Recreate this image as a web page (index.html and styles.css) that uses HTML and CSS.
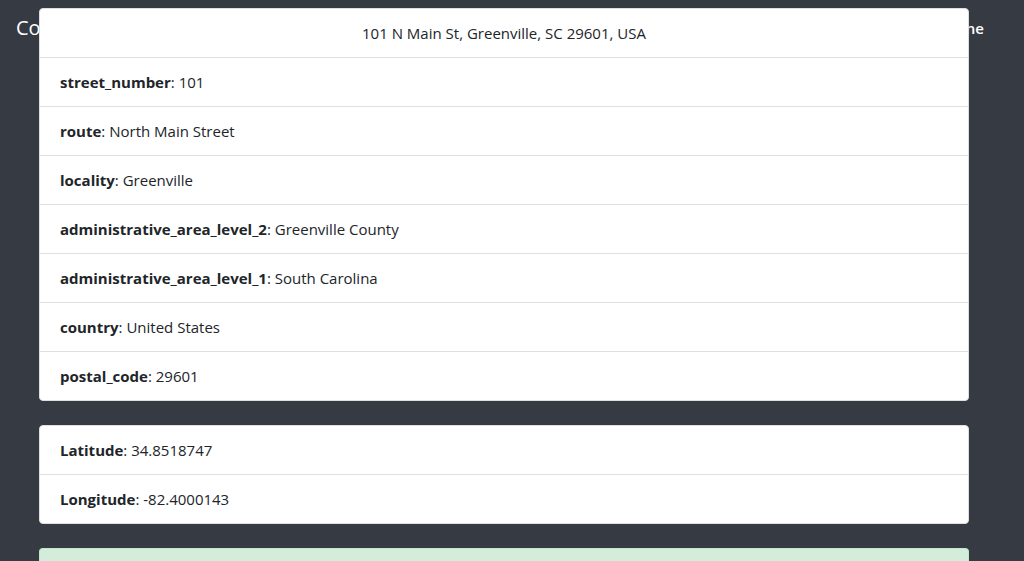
FILE: index.html
```html
<!DOCTYPE html>
<html lang="en">
<head>
<meta charset="utf-8">
<title>Geocode</title>
<link rel="stylesheet" href="styles.css">
</head>
<body>
<nav class="navbar"><a class="brand" href="#">Co</a><a class="nav-link" href="#">ne</a></nav>
<main class="results">
<ul class="list-group">
<li class="item centered">101 N Main St, Greenville, SC 29601, USA</li>
<li class="item"><strong>street_number</strong>: 101</li>
<li class="item"><strong>route</strong>: North Main Street</li>
<li class="item"><strong>locality</strong>: Greenville</li>
<li class="item"><strong>administrative_area_level_2</strong>: Greenville County</li>
<li class="item"><strong>administrative_area_level_1</strong>: South Carolina</li>
<li class="item"><strong>country</strong>: United States</li>
<li class="item"><strong>postal_code</strong>: 29601</li>
</ul>
<ul class="list-group">
<li class="item"><strong>Latitude</strong>: 34.8518747</li>
<li class="item"><strong>Longitude</strong>: -82.4000143</li>
</ul>
<div class="alert"></div>
</main>
</body>
</html>
```
FILE: styles.css
```css
* { box-sizing: border-box; }
body {
  margin: 0;
  background: #363a42;
  color: #212529;
  font: 15px/24px "Segoe UI", "Open Sans", sans-serif;
}
.navbar {
  position: absolute;
  top: 0;
  left: 0;
  right: 0;
  display: flex;
  justify-content: space-between;
  align-items: center;
  padding: 8px 40px 8px 16px;
}
.brand { color: #fff; text-decoration: none; font-size: 20px; line-height: 40px; }
.nav-link { color: #fff; text-decoration: none; font-weight: 600; }
.results {
  position: relative;
  display: flex;
  flex-direction: column;
  gap: 24px;
  height: 100vh;
  overflow: hidden;
  padding: 8px 55px 0 39px;
}
.list-group {
  flex-shrink: 0;
  margin: 0;
  padding: 0;
  list-style: none;
  background: #fff;
  border: 1px solid #dfdfdf;
  border-radius: 4px;
}
.item { padding: 12px 20px; }
.item + .item { border-top: 1px solid #dfdfdf; }
.centered { text-align: center; }
.alert {
  flex: 1;
  background: #d4edda;
  border: 1px solid #c3e6cb;
  border-bottom: 0;
  border-radius: 4px 4px 0 0;
}
```
